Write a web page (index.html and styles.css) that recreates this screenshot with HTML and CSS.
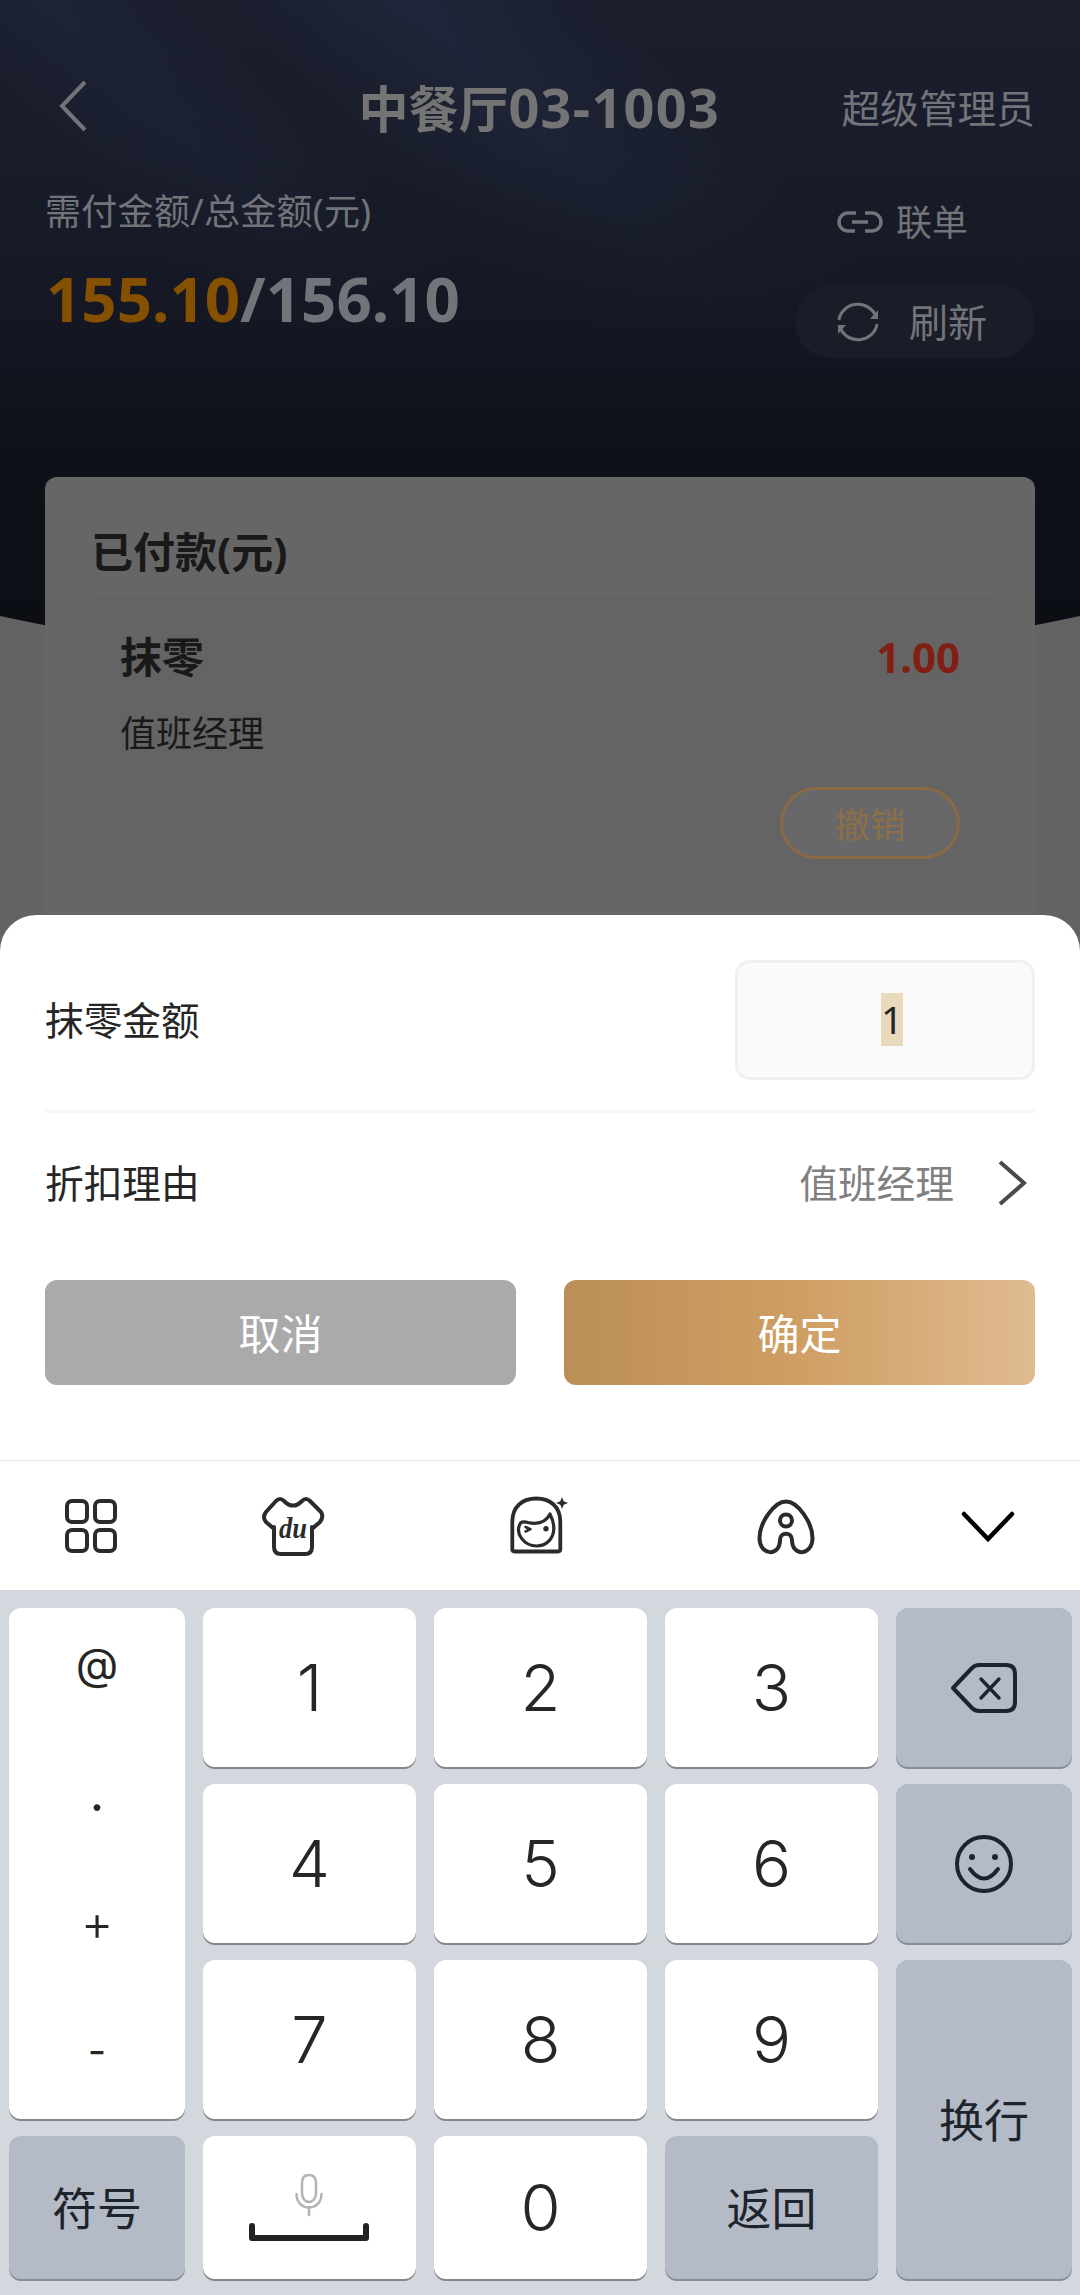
FILE: index.html
```html
<!DOCTYPE html>
<html lang="zh-CN">
<head>
<meta charset="utf-8">
<title>中餐厅03-1003</title>
<link rel="stylesheet" href="styles.css">
</head>
<body>
<div class="screen">
  <main class="page">
    <svg class="page-curve" viewBox="0 0 1080 100" preserveAspectRatio="none"><path d="M0 2Q60 15 130 26V100H0ZM1080 2Q1020 15 950 26V100H1080Z"/></svg>
    <header class="topbar">
      <svg class="back" viewBox="0 0 28 52"><path d="M26 2 3 26 26 50"/></svg>
      <h1 class="title">中餐厅<span class="title-code">03-1003</span></h1>
      <span class="user">超级管理员</span>
    </header>
    <section class="summary">
      <div class="totals">
        <div class="totals-label">需付金额/总金额(元)</div>
        <div class="totals-value"><span class="due">155.10</span>/156.10</div>
      </div>
      <div class="actions">
        <div class="link-order">
          <svg class="link-icon" viewBox="0 0 46 22"><path d="M19 2H11A9 9 0 0 0 11 20H18M28 2H35A9 9 0 0 1 35 20H28M15 11H31"/></svg>
          <span>联单</span>
        </div>
        <div class="refresh">
          <svg class="refresh-icon" viewBox="0 0 42 40"><path d="M2 18A19 18 0 0 1 39 15M40 22A19 18 0 0 1 3 25"/><path class="tip" d="M41 8V17H33ZM1 32V23H9Z"/></svg>
          <span>刷新</span>
        </div>
      </div>
    </section>
    <section class="paid">
      <h2 class="paid-title">已付款(元)</h2>
      <div class="paid-item">
        <div class="paid-row"><span>抹零</span><span class="paid-amount">1.00</span></div>
        <div class="paid-reason">值班经理</div>
        <button class="revoke">撤销</button>
      </div>
    </section>
  </main>

  <section class="sheet">
    <div class="field amount-field">
      <span>抹零金额</span>
      <div class="amount-input"><span class="selected">1</span></div>
    </div>
    <div class="field reason-field">
      <span>折扣理由</span>
      <div class="reason"><span>值班经理</span><svg class="chevron" viewBox="0 0 30 46"><path d="M3 2 27 23 3 44"/></svg></div>
    </div>
    <div class="buttons">
      <button class="btn cancel">取消</button>
      <button class="btn confirm">确定</button>
    </div>
  </section>

  <nav class="toolbar">
    <svg class="tool" viewBox="0 0 64 64"><g stroke-width="4"><rect x="7" y="7" width="20" height="21" rx="5"/><rect x="35" y="7" width="20" height="21" rx="5"/><rect x="7" y="36" width="20" height="21" rx="5"/><rect x="35" y="36" width="20" height="21" rx="5"/></g></svg>
    <svg class="tool" viewBox="0 0 64 64"><path stroke-width="4" d="M13 33 12 34 5 28Q1 23 5 18L15 7Q19 3 23 7Q32 16 41 7Q45 3 49 7L60 18Q63 23 59 28L52 34 51 33V53Q51 60 44 60H20Q13 60 13 53V33Z"/><text class="du" x="18" y="44" textLength="28" lengthAdjust="spacingAndGlyphs">du</text></svg>
    <svg class="tool" viewBox="0 0 64 64"><g stroke-width="3.8"><path d="M3.300 56V28C3.300 12 14 4.500 27.300 4.500S51.300 12 51.300 28V55Q51.300 57.500 49 57.500H5.500Q3.300 57.500 3.300 55Z"/><path stroke-width="3.2" d="M11.500 29Q14 27 19 28.500Q35 32 41 20Q45 28 44.800 35C44.500 45 37 52 27.500 52C16 52 5 40 11.500 29Z"/><path stroke-width="2.500" d="m16.500 33 5 2.200-5 2.300"/></g><circle class="solid" cx="37" cy="34.700" r="2.700"/><path class="solid" d="m53 3 1.700 4.300 4.300 1.700-4.300 1.700-1.700 4.300-1.700-4.300-4.300-1.700 4.300-1.700Z"/></svg>
    <svg class="tool" viewBox="0 0 64 64"><g stroke-width="4"><path d="M32 7.500C44 7.500 58.500 29 58.500 44C58.500 62 38 63 38 46C38 37.500 26 37.500 26 46C26 63 5.500 62 5.500 44C5.500 29 20 7.500 32 7.500Z"/><circle cx="32" cy="26.500" r="6"/></g></svg>
    <svg class="tool down" viewBox="0 0 64 64"><path d="m8 20 24 25 24-25"/></svg>
  </nav>

  <section class="keyboard">
    <div class="key symbols"><span class="at">@</span><span class="dot">.</span><span class="plus">+</span><span class="minus">-</span></div>
    <div class="key">1</div>
    <div class="key">2</div>
    <div class="key">3</div>
    <div class="key gray"><svg class="backspace" viewBox="0 0 68 50"><path d="M3 25 22 5Q25 2 29 2H56Q65 2 65 11V39Q65 48 56 48H29Q25 48 22 45Z"/><path stroke-width="3.400" d="M31 16 49 35M49 16 31 35"/></svg></div>
    <div class="key">4</div>
    <div class="key">5</div>
    <div class="key">6</div>
    <div class="key gray"><svg class="smile" viewBox="0 0 60 60"><circle cx="30" cy="30" r="27"/><path d="M16 35Q30 54 44 35"/><g class="solid"><circle cx="18" cy="23" r="3"/><circle cx="41" cy="23" r="3"/></g></svg></div>
    <div class="key">7</div>
    <div class="key">8</div>
    <div class="key">9</div>
    <div class="key gray word enter">换行</div>
    <div class="key gray word">符号</div>
    <div class="key space"><svg class="space-icon" viewBox="0 0 120 70"><path class="mic" d="M60 2C55 2 53 5 53 10V20C53 32 67 32 67 20V10C67 5 65 2 60 2ZM47.500 21C47.500 39 72.500 39 72.500 21M60 34V42"/><path class="bar" d="M3 53V65H117V53"/></svg></div>
    <div class="key">0</div>
    <div class="key gray word">返回</div>
  </section>
</div>
</body>
</html>
```
FILE: styles.css
```css
* { box-sizing: border-box; }
body {
  margin: 0;
  background: #636363;
  font-family: "Noto Sans", "Noto Sans CJK SC", sans-serif;
  color: #262626;
}
h1, h2 { margin: 0; }
button { font: inherit; padding: 0; border: 0; }
svg { display: block; fill: none; stroke: currentColor; flex: none; }
.solid { fill: currentColor; stroke: none; }

.screen { width: 1080px; height: 2295px; display: flex; flex-direction: column; overflow: hidden; }

/* dimmed page behind the sheet */
.page {
  position: relative;
  height: 945px;
  margin-bottom: -30px;
  padding: 0 45px;
  flex: none;
  background:
    linear-gradient(rgba(26, 30, 45, .2) 0, rgba(23, 27, 40, .4) 150px, #141722 340px, #0e1119 440px, #0c0e14 640px, #636363 640px),
    linear-gradient(45deg, transparent 32%, rgba(38, 46, 70, .4) 40%, transparent 48%, transparent 50%, rgba(38, 47, 72, .6) 61%, transparent 72%) 0 0 / 1080px 640px no-repeat,
    #1a1e2d;
}
.page-curve { position: absolute; left: 0; top: 614px; width: 1080px; height: 100px; fill: #636363; stroke: none; }
.topbar { position: relative; height: 182px; padding-top: 34px; display: flex; align-items: center; justify-content: space-between; color: #72747a; }
.back { width: 28px; height: 52px; margin: 0 0 4px 14px; stroke-width: 4; }
.title { margin: 0 0 1px 150px; font: 700 50px/70px "Noto Sans", "Noto Sans CJK SC", sans-serif; white-space: nowrap; color: #747474; }
.title-code { font-size: 54px; letter-spacing: 1.3px; }
.user { font-size: 38.700px; padding-bottom: 5px; }
.summary { display: flex; justify-content: space-between; height: 295px; color: #72747a; }
.totals-label { font-size: 36px; line-height: 50px; margin-top: 5px; letter-spacing: .3px; white-space: nowrap; }
.totals-value { font: 700 61.800px/70px "Noto Sans", sans-serif; margin: 26px 0 0 1px; white-space: nowrap; }
.due { color: #855000; }
.actions { width: 240px; }
.link-order { display: flex; align-items: center; gap: 13px; height: 54px; margin: 13px 0 0 42px; font-size: 36px; }
.link-order span, .refresh span { padding-bottom: 3px; }
.link-icon { width: 46px; height: 22px; stroke-width: 3.500; }
.refresh { display: flex; align-items: center; gap: 30px; height: 73px; margin-top: 36px; padding-left: 42px; border-radius: 37px; background: #1a1d27; font-size: 39px; }
.refresh-icon { width: 42px; height: 40px; stroke-width: 3; }
.tip { fill: currentColor; stroke: none; }

.paid { position: relative; height: 468px; padding: 45px 42px 0 44px; border-radius: 12px 12px 0 0; background: #666; color: #191919; }
.paid-title { padding-left: 2px; font-size: 42px; line-height: 60px; white-space: nowrap; }
.paid-item { height: 298px; margin-top: 14px; padding: 31px 33px 0 31px; display: flex; flex-direction: column; background: #646464; }
.paid-row { display: flex; justify-content: space-between; font-weight: 700; font-size: 42px; line-height: 60px; }
.paid-amount { color: #821f14; }
.paid-reason { margin-top: 22px; font-size: 36px; line-height: 50px; }
.revoke { align-self: flex-end; width: 180px; height: 72px; margin-top: 28px; padding-bottom: 2px; border: 3px solid #8a6a45; border-radius: 36px; background: #68686a; color: #8b6f47; font-size: 35.500px; }

.sheet { position: relative; height: 545px; padding: 46px 45px 0; flex: none; background: #fff; border-radius: 36px 36px 0 0; font-size: 38.700px; }
.field { display: flex; align-items: center; justify-content: space-between; }
.field > span { padding-bottom: 4px; }
.amount-field { height: 152px; padding-bottom: 31px; border-bottom: 3px solid #f7f7f7; }
.amount-input { width: 300px; height: 120px; padding: 0 0 2px 14px; display: flex; align-items: center; justify-content: center; background: #fafafa; border: 3px solid #f0f0f0; border-radius: 15px; }
.selected { background: #e8dabb; line-height: 53px; }
.reason-field { height: 141px; padding-bottom: 2px; }
.reason { display: flex; align-items: center; gap: 43px; color: #808080; }
.reason span { padding-bottom: 4px; }
.chevron { width: 30px; height: 46px; margin-right: 8px; stroke-width: 4; color: #4b4b4b; }
.buttons { display: grid; grid-template-columns: 1fr 1fr; gap: 48px; margin-top: 26px; }
.btn { height: 105px; padding-bottom: 3px; border-radius: 12px; color: #fff; font-size: 42px; }
.cancel { background: #aaa; }
.confirm { background: linear-gradient(90deg, #bb8e58, #cf9e63 50%, #e0bb92); }

.toolbar { height: 130px; flex: none; display: flex; background: #fff; border-top: 1px solid #e5e6e7; padding: 33px 60px 0 60px; }
.tool { width: 64px; height: 64px; color: #2b2b2b; stroke-linejoin: round; stroke-linecap: round; }
.tool:nth-child(2) { margin-left: 137px; }
.tool:nth-child(3) { margin-left: 184px; }
.tool:nth-child(4) { margin-left: 181px; }
.tool:nth-child(5) { margin-left: 138px; }
.tool.down { color: #000; stroke-width: 4.500; stroke-linejoin: miter; }
.du { fill: currentColor; stroke: none; font: italic 700 29px "Liberation Serif", serif; }

.keyboard {
  flex: 1;
  display: grid;
  grid-template-columns: 176px repeat(3, 213px) 176px;
  grid-template-rows: repeat(3, 159px) 143px;
  gap: 17px 18px;
  padding: 18px 9px;
  background: #d3d7de;
}
.key { display: flex; align-items: center; justify-content: center; background: #fff; border-radius: 12px; box-shadow: 0 2px 0 #858789; font: 350 65px/1 "Inter", sans-serif; }
.gray { background: #b4bac6; box-shadow: 0 2px 0 #858b97; color: #1e242c; }
.word { font: 45px/1 "Noto Sans CJK SC", sans-serif; padding-bottom: 2px; }
.enter { grid-row: span 2; }
.symbols { grid-row: span 3; display: grid; grid-template-rows: 114px 133px 129px 1fr; justify-items: center; align-items: center; font-size: 44px; font-weight: 400; }
.at { padding-bottom: 2px; }
.dot { padding-top: 8px; font-size: 52px; }
.plus { padding-top: 6px; font-weight: 350; font-size: 50px; }
.minus { padding-bottom: 2px; font-size: 40px; }
.backspace { width: 68px; height: 50px; stroke-width: 4; stroke-linejoin: round; stroke-linecap: round; }
.smile { width: 60px; height: 60px; stroke-width: 4; stroke-linecap: round; }
.space-icon { width: 120px; height: 70px; margin-right: 2px; stroke-linecap: round; stroke-linejoin: round; }
.mic { stroke: #b3b3b3; stroke-width: 2.500; }
.bar { stroke: #222; stroke-width: 6; }
```
